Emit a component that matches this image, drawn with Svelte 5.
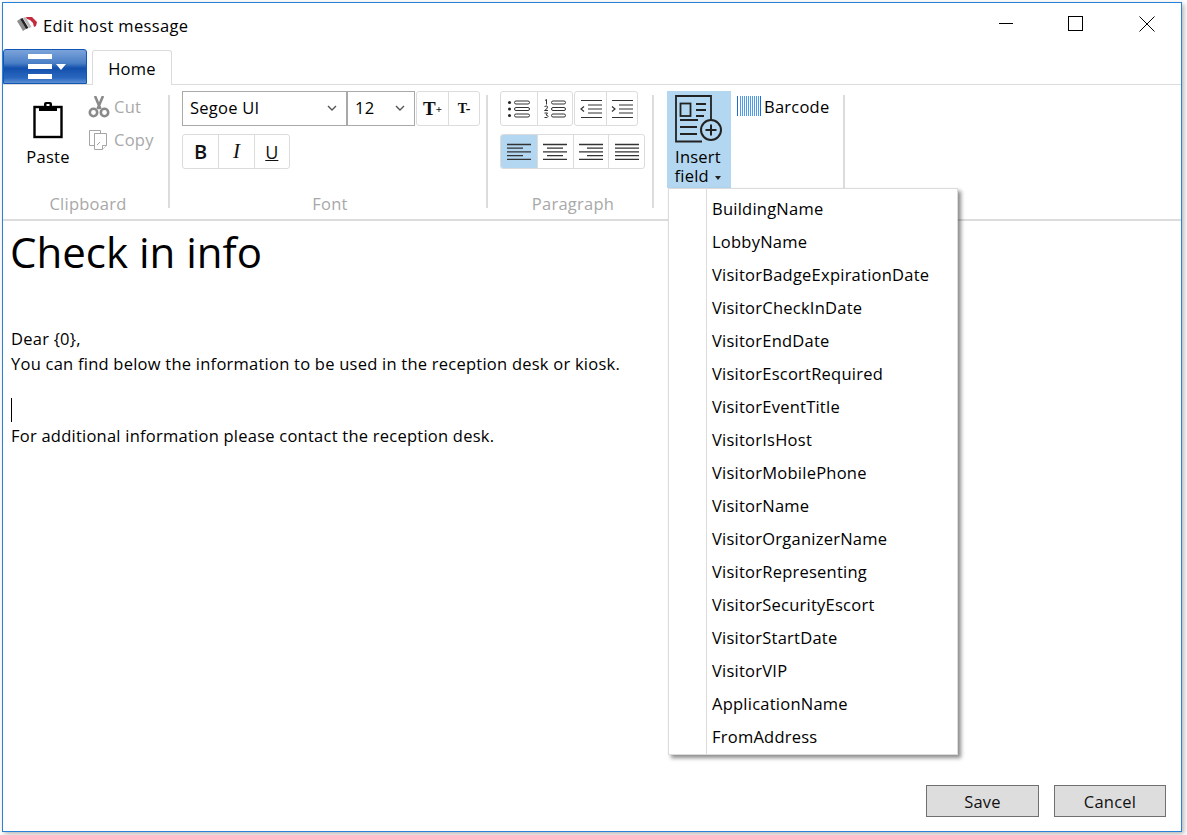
<script>
  const fields = [
    'BuildingName', 'LobbyName', 'VisitorBadgeExpirationDate', 'VisitorCheckInDate',
    'VisitorEndDate', 'VisitorEscortRequired', 'VisitorEventTitle', 'VisitorIsHost',
    'VisitorMobilePhone', 'VisitorName', 'VisitorOrganizerName', 'VisitorRepresenting',
    'VisitorSecurityEscort', 'VisitorStartDate', 'VisitorVIP', 'ApplicationName', 'FromAddress'
  ]

  const alignLines = [
    [[0, 24], [0, 16], [0, 24], [0, 16], [0, 24]],
    [[0, 24], [4, 20], [0, 24], [4, 20], [0, 24]],
    [[0, 24], [8, 24], [0, 24], [8, 24], [0, 24]],
    [[0, 24], [0, 24], [0, 24], [0, 24], [0, 24]]
  ]

  const barcodeBars = [0, 3, 5, 7, 9, 11, 13, 15, 17, 19, 21, 23]
</script>

<div class="screen">
  <div class="window">
    <header class="titlebar">
      <svg class="logo" width="22" height="15" viewBox="0 0 22 15">
        <path d="M1 4l3-2 6 10-3 2z" fill="#8d8d8d" />
        <path d="M4 2l2.500-1 6 10-2.500 1z" fill="#222" />
        <path d="M7 1l2.500-1 6 10-2.500 1z" fill="#b9b9b9" />
        <path d="M10 0h6l5 5-1 4-2 1-1-4-3-3-3-1z" fill="#c42a3c" />
      </svg>
      <span class="title">Edit host message</span>
      <div class="controls">
        <svg width="16" height="16" viewBox="0 0 16 16"><path d="M2 7.500h15" stroke="#000" /></svg>
        <svg width="16" height="16" viewBox="0 0 16 16"><rect x="0.5" y="0.5" width="14" height="14" fill="none" stroke="#000" /></svg>
        <svg width="16" height="16" viewBox="0 0 16 16"><path d="M0.500 0.500l15 15M15.500 0.500l-15 15" stroke="#000" /></svg>
      </div>
    </header>

    <div class="tabs">
      <button class="app-menu">
        <span class="bars"><i></i><i></i><i></i></span>
        <span class="caret"></span>
      </button>
      <div class="tab">Home</div>
    </div>

    <div class="ribbon">
      <section class="group clipboard">
        <div class="group-body clip-body">
          <div class="paste">
            <svg width="32" height="37" viewBox="0 0 32 37">
              <rect x="2.500" y="5" width="27" height="30" fill="#fff" stroke="#000" stroke-width="2.400" />
              <path d="M7 4h5V2q0-2 2-2h4q2 0 2 2v2h5v5H7z" fill="#000" />
              <rect x="14.500" y="2" width="3" height="2" fill="#fff" />
            </svg>
            <span>Paste</span>
          </div>
          <div class="clip-side">
            <div class="side-item">
              <svg width="22" height="22" viewBox="0 0 22 22" fill="none" stroke="#8a8a8a">
                <path d="M7 0l5.500 13M15 0l-5.500 13" stroke-width="2.600" />
                <circle cx="5.500" cy="16.500" r="3.700" stroke-width="2.600" />
                <circle cx="16.500" cy="16.500" r="3.700" stroke-width="2.600" />
              </svg>
              <span>Cut</span>
            </div>
            <div class="side-item">
              <svg width="22" height="22" viewBox="0 0 22 22" fill="#fff" stroke="#a5a5a5">
                <path d="M1.500 1.500h11v15h-11z" />
                <path d="M6.500 4.500h12v12l-4 4h-8z" />
                <path d="M14.500 20.500v-4h4M9 16l3-3" />
              </svg>
              <span>Copy</span>
            </div>
          </div>
        </div>
        <div class="group-label">Clipboard</div>
      </section>

      <section class="group font">
        <div class="group-body">
          <div class="row">
            <div class="combo family">
              <span>Segoe UI</span>
              <svg width="10" height="6" viewBox="0 0 10 6"><path d="M1 1l4 4 4-4" fill="none" stroke="#555" stroke-width="1.400" /></svg>
            </div>
            <div class="combo size">
              <span>12</span>
              <svg width="10" height="6" viewBox="0 0 10 6"><path d="M1 1l4 4 4-4" fill="none" stroke="#555" stroke-width="1.400" /></svg>
            </div>
            <div class="btn-group">
              <div class="btn w31 serif grow">T<small>+</small></div>
              <div class="btn w31 serif shrink">T-</div>
            </div>
          </div>
          <div class="row">
            <div class="btn-group">
              <div class="btn w35 bold">B</div>
              <div class="btn w35 serif italic">I</div>
              <div class="btn w35 under">U</div>
            </div>
          </div>
        </div>
        <div class="group-label">Font</div>
      </section>

      <section class="group paragraph">
        <div class="group-body">
          <div class="row list-row">
            <div class="btn-group">
              <div class="btn w35h">
                <svg width="24" height="20" viewBox="0 0 24 20" fill="none" stroke="#333">
                  <circle cx="2.500" cy="3.500" r="1.500" fill="#222" stroke="none" />
                  <circle cx="2.500" cy="10" r="1.500" fill="#222" stroke="none" />
                  <circle cx="2.500" cy="16.500" r="1.500" fill="#222" stroke="none" />
                  <rect x="7.500" y="2" width="15" height="3" rx="1.500" />
                  <rect x="7.500" y="8.500" width="15" height="3" rx="1.500" />
                  <rect x="7.500" y="15" width="15" height="3" rx="1.500" />
                </svg>
              </div>
              <div class="btn w35h">
                <svg width="24" height="20" viewBox="0 0 24 20" fill="none" stroke="#333">
                  <path d="M2 1.500l1.500-1v5M1.500 7.500q3-1.500 3 .5t-3 3.500h3.500M1.500 14h3l-1.500 2q2 0 2 1.500t-3.500 1" stroke-width="1" />
                  <rect x="8.500" y="2" width="14" height="3" rx="1.500" />
                  <rect x="8.500" y="8.500" width="14" height="3" rx="1.500" />
                  <rect x="8.500" y="15" width="14" height="3" rx="1.500" />
                </svg>
              </div>
            </div>
            <div class="btn-group">
              <div class="btn w31">
                <svg width="24" height="20" viewBox="0 0 24 20" fill="none" stroke="#333" stroke-width="1.200">
                  <path d="M2 1.500h21M9 6h14M9 10h14M9 14h14M2 18.500h21M5 7.500l-3 2.500 3 2.500" />
                </svg>
              </div>
              <div class="btn w31">
                <svg width="24" height="20" viewBox="0 0 24 20" fill="none" stroke="#333" stroke-width="1.200">
                  <path d="M2 1.500h21M9 6h14M9 10h14M9 14h14M2 18.500h21M2 7.500l3 2.500-3 2.500" />
                </svg>
              </div>
            </div>
          </div>
          <div class="row">
            <div class="btn-group">
              {#each alignLines as lines, i}
                <div class="btn w36" class:on={i === 0}>
                  <svg width="24" height="18" viewBox="0 0 24 18" stroke="#333" stroke-width="1.300">
                    {#each lines as [a, b], n}
                      <path d="M{a} {1.5 + n * 3.7}H{b}" />
                    {/each}
                  </svg>
                </div>
              {/each}
            </div>
          </div>
        </div>
        <div class="group-label">Paragraph</div>
      </section>

      <section class="group insert">
        <div class="group-body insert-body">
          <div class="insert-field">
            <svg width="48" height="48" viewBox="0 0 48 48" fill="none" stroke="#222" stroke-width="1.800">
              <path d="M36 25V1H1v45.500h26" />
              <rect x="5.500" y="8.500" width="10" height="12.500" />
              <path d="M21 9h10M21 15h10M21 21h8M5 25h18M5 32h17M5 39h17" />
              <circle cx="36" cy="35" r="10" stroke-width="2" />
              <path d="M36 29.500v11M30.500 35h11" stroke-width="2" />
            </svg>
            <div class="insert-label">
              <span>Insert</span>
              <span>field <i class="mini-caret"></i></span>
            </div>
          </div>
          <div class="barcode">
            <svg width="24" height="20" viewBox="0 0 24 20">
              {#each barcodeBars as x, i}
                <rect x={x} y="0" width="1" height="20" fill={i === 0 || i === 11 ? '#1c6fd0' : '#4f9cec'} />
              {/each}
            </svg>
            <span>Barcode</span>
          </div>
        </div>
      </section>
    </div>

    <main class="editor">
      <h1>Check in info</h1>
      <p>Dear &#123;0&#125;,</p>
      <p>You can find below the information to be used in the reception desk or kiosk.</p>
      <div class="caret-line"></div>
      <p>For additional information please contact the reception desk.</p>
    </main>

    <footer class="actions">
      <button>Save</button>
      <button class="cancel">Cancel</button>
    </footer>

    <ul class="menu">
      {#each fields as field}
        <li>{field}</li>
      {/each}
    </ul>
  </div>
</div>

<style>
  :global(body) {
    margin: 0;
    background: #fff;
  }

  .screen {
    width: 1187px;
    height: 835px;
    box-sizing: border-box;
    padding: 2px 5px 3px 2px;
    overflow: hidden;
    background: #fff;
    font-family: "Open Sans", "Noto Sans", sans-serif;
    font-size: 16.5px;
    letter-spacing: 0.24px;
    color: #000;
  }

  .window {
    position: relative;
    height: 100%;
    box-sizing: border-box;
    border: 1px solid #2b82d4;
    background: #fff;
    display: flex;
    flex-direction: column;
    box-shadow: 2px 2px 5px rgba(0, 0, 0, 0.3);
  }

  .titlebar {
    height: 46px;
    flex: none;
    display: flex;
    align-items: center;
    padding: 0 0 2px 13px;
    box-sizing: border-box;
  }

  .title {
    letter-spacing: 0.36px;
  }

  .logo {
    margin-right: 5px;
    margin-top: -1px;
  }

  .controls {
    margin-left: auto;
    display: flex;
    gap: 55px;
    padding-right: 26px;
    margin-top: -2px;
  }

  .tabs {
    height: 35px;
    flex: none;
    display: flex;
    align-items: flex-end;
    gap: 5px;
    box-sizing: border-box;
    position: relative;
  }

  .app-menu {
    width: 84px;
    height: 35px;
    padding: 0;
    border: 1px solid #1256b4;
    border-radius: 3px 3px 0 0;
    background: linear-gradient(#7ba3da 0%, #4a7fc6 40%, #1350ac 55%, #2a68bf 85%, #5d8fd4 100%);
    display: flex;
    align-items: center;
    justify-content: center;
    gap: 4px;
  }

  .bars {
    display: flex;
    flex-direction: column;
    gap: 5px;
    width: 24px;
    margin-left: 3px;
  }

  .bars i {
    display: block;
    height: 5px;
    background: #fff;
  }

  .caret {
    width: 0;
    height: 0;
    border-left: 5px solid transparent;
    border-right: 5px solid transparent;
    border-top: 6px solid #fff;
  }

  .tab {
    width: 80px;
    height: 35px;
    box-sizing: border-box;
    border: 1px solid #dcdcdc;
    border-bottom: 0;
    border-radius: 3px 3px 0 0;
    background: #fff;
    text-align: center;
    line-height: 36px;
    position: relative;
    z-index: 1;
    margin-bottom: -1px;
  }

  .ribbon {
    height: 137px;
    flex: none;
    box-sizing: border-box;
    display: flex;
    border-top: 1px solid #dcdcdc;
    border-bottom: 2px solid #dcdcdc;
  }

  .group {
    position: relative;
    box-sizing: border-box;
    flex: none;
  }

  .group::after {
    content: "";
    position: absolute;
    right: 0;
    top: 10px;
    height: 113px;
    width: 2px;
    background: #dcdcdc;
  }

  .group-body {
    height: 107px;
    box-sizing: border-box;
    padding-top: 6px;
  }

  .group-label {
    text-align: center;
    line-height: 24px;
    color: #a8a8a8;
  }

  .clipboard { width: 167px; padding-right: 2px; }
  .clipboard .group-label { padding-left: 5px; }
  .font { width: 318px; padding: 0 2px 0 12px; }
  .font .group-label { padding-right: 8px; }
  .paragraph { width: 166px; padding: 0 2px 0 12px; }
  .paragraph .group-label { padding-right: 6px; }
  .insert { width: 191px; padding: 0 0 0 13px; }

  .clip-body {
    display: flex;
    padding-left: 22px;
  }

  .paste {
    width: 46px;
    display: flex;
    flex-direction: column;
    align-items: center;
    padding-top: 11px;
    gap: 6px;
  }

  .clip-side {
    margin-left: 17px;
    display: flex;
    flex-direction: column;
    gap: 11px;
    padding-top: 5px;
  }

  .side-item {
    display: flex;
    align-items: center;
    gap: 4px;
    height: 22px;
    color: #a8a8a8;
  }

  .side-item span {
    margin-top: -2px;
  }

  .row {
    display: flex;
    height: 35px;
    margin-bottom: 8px;
  }

  .list-row {
    gap: 1px;
  }

  .combo {
    height: 35px;
    box-sizing: border-box;
    border: 1px solid #a9a9a9;
    display: flex;
    align-items: center;
    justify-content: space-between;
    padding: 0 9px 2px 7px;
  }

  .family { width: 165px; }
  .size { width: 68px; margin-right: 1px; }

  .btn-group {
    display: flex;
    border: 1px solid #dcdcdc;
    border-radius: 3px;
    box-sizing: border-box;
    height: 35px;
    overflow: hidden;
  }

  .btn {
    height: 100%;
    box-sizing: border-box;
    display: flex;
    align-items: center;
    justify-content: center;
    border-left: 1px solid #dcdcdc;
    color: #111;
    letter-spacing: 0;
  }

  .btn:first-child { border-left: 0; }
  .btn.on { background: #b3d7f0; }

  .w36 { width: 35.75px; }
  .w35h { width: 35.5px; }
  .w35 { width: 35.34px; }
  .w31 { width: 31px; }

  .bold { font-weight: 600; font-size: 20px; }
  .serif { font-family: "Liberation Serif", serif; }
  .italic { font-style: italic; font-size: 21px; }
  .under { text-decoration: underline; font-size: 18px; }
  .grow { font-weight: 700; font-size: 19px; }
  .grow small { font-size: 11px; }
  .shrink { font-weight: 700; font-size: 14px; }

  .insert-body {
    display: flex;
    padding-top: 6px;
  }

  .insert-field {
    width: 64px;
    height: 97px;
    background: #b3d7f0;
    display: flex;
    flex-direction: column;
    align-items: center;
    padding-top: 4px;
    box-sizing: border-box;
    flex: none;
  }

  .insert-label {
    display: flex;
    flex-direction: column;
    align-items: center;
    line-height: 19px;
    margin-top: 4px;
    margin-right: 2px;
  }

  .mini-caret {
    display: inline-block;
    width: 0;
    height: 0;
    border-left: 3px solid transparent;
    border-right: 3px solid transparent;
    border-top: 4px solid #222;
    margin: 0 0 2px 2px;
  }

  .barcode {
    margin-left: 6px;
    display: flex;
    gap: 3px;
    height: 20px;
    padding-top: 5px;
    align-items: center;
  }

  .editor {
    flex: 1;
    min-height: 0;
    padding-left: 8px;
    line-height: 25px;
  }

  h1 {
    font-weight: 400;
    font-size: 42px;
    letter-spacing: 0;
    line-height: 62px;
    margin: 0 0 41px -1px;
    height: 64px;
  }

  p { margin: 0; }

  .caret-line {
    width: 1px;
    height: 24px;
    background: #000;
    margin-top: 22px;
    margin-bottom: 1px;
  }

  .actions {
    flex: none;
    height: 46px;
    display: flex;
    justify-content: flex-end;
    gap: 15px;
    padding-right: 15px;
    box-sizing: border-box;
  }

  .actions button {
    width: 113px;
    height: 32px;
    background: #dddddd;
    border: 1px solid #707070;
    font: inherit;
    letter-spacing: inherit;
    color: #111;
    padding: 0;
  }

  .actions .cancel {
    width: 112px;
  }

  .menu {
    position: absolute;
    left: 665px;
    top: 185px;
    width: 290px;
    margin: 0;
    padding: 3px 0 1px;
    list-style: none;
    box-sizing: border-box;
    background: linear-gradient(to right, #fff 37px, #dcdcdc 37px, #dcdcdc 38px, #fff 38px);
    border: 1px solid #dcdcdc;
    box-shadow: 3px 3px 4px rgba(0, 0, 0, 0.45);
    z-index: 5;
  }

  .menu li {
    height: 33px;
    line-height: 33px;
    padding-left: 43px;
  }
</style>
